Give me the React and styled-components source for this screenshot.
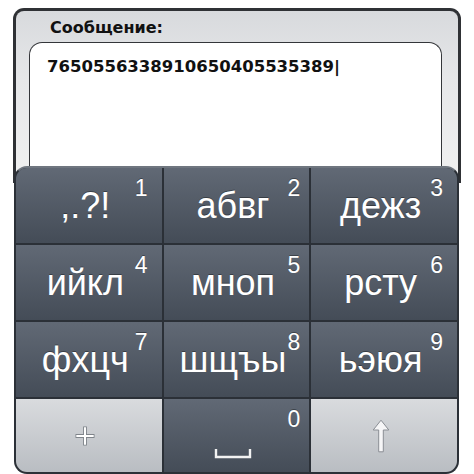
import React from 'react'
import styled, { createGlobalStyle } from 'styled-components'

const GlobalStyle = createGlobalStyle`
  html, body {
    margin: 0;
    padding: 0;
    background: #fff;
    overflow: hidden;
  }
`

const Page = styled.div`
  width: 474px;
  height: 474px;
  padding: 8px 13px 0 13px;
  box-sizing: border-box;
  overflow: hidden;
`

const Frame = styled.div`
  height: 175px;
  box-sizing: border-box;
  border: 3px solid #2f3135;
  border-bottom: none;
  border-radius: 11px 11px 0 0;
  background: linear-gradient(#d8dadd 0%, #e6e7e9 40%, #f1f1f1 100%);
  display: flex;
  flex-direction: column;
`

const Label = styled.div`
  font-family: 'DejaVu Sans', 'Open Sans', sans-serif;
  font-weight: 700;
  font-size: 16px;
  line-height: 22px;
  color: #111;
  padding: 6px 0 0 34px;
  height: 31px;
  box-sizing: border-box;
`

const MessageBox = styled.div`
  flex: 1;
  margin: 0 16px 0 13px;
  background: #fff;
  border: 1.5px solid #34363a;
  border-bottom: none;
  border-radius: 13px 13px 0 0;
  padding: 13px 0 0 17px;
  font-family: 'DejaVu Sans', 'Open Sans', sans-serif;
  font-weight: 700;
  font-size: 16.5px;
  line-height: 22px;
  color: #111;
`

const Keypad = styled.div`
  position: relative;
  z-index: 1;
  margin: -17px 2px 0 1px;
  display: grid;
  grid-template-columns: repeat(3, 1fr);
  grid-template-rows: 75px 75px 75px 73px;
  gap: 2px;
  background: #2b3037;
  border: 2px solid #2b3037;
  border-top-color: #6f767f;
  border-radius: 13px;
  overflow: hidden;
`

const Key = styled.div`
  position: relative;
  display: flex;
  align-items: ${p => (p.$bottom ? 'flex-end' : 'center')};
  justify-content: center;
  padding: 0 7px ${p => (p.$bottom ? '13px' : '0')} 0;
  background: ${p => p.$light
    ? 'linear-gradient(#d9dbde, #b9bdc2)'
    : 'linear-gradient(#616975, #444c57)'};
  font-family: 'Liberation Sans', Arial, sans-serif;
  color: #fff;
`

const Letters = styled.span`
  font-size: 36px;
  line-height: 1;
  text-shadow: 0 -1px 0 rgba(0, 0, 0, 0.35);
`

const Digit = styled.span`
  position: absolute;
  top: 9px;
  right: ${p => p.$right}px;
  font-size: 23px;
  line-height: 1;
  text-shadow: 0 -1px 0 rgba(0, 0, 0, 0.35);
`

const PlusIcon = () => (
  <svg width="22" height="22" viewBox="0 0 22 22">
    <path d="M11 1.5v19M1.5 11h19" stroke="#7f848a" strokeWidth="3.8" fill="none" />
    <path d="M11 2.3v17.4M2.3 11h17.4" stroke="#ffffff" strokeWidth="2" fill="none" />
  </svg>
)

const SpaceIcon = () => (
  <svg width="38" height="11" viewBox="0 0 38 11">
    <path d="M2 1v8h34V1" stroke="#f2f2f2" strokeWidth="2.4" fill="none" />
  </svg>
)

const ArrowIcon = () => (
  <svg width="18" height="34" viewBox="0 0 18 34">
    <path
      d="M9 1.2L16.8 11H11.3V32.8H6.7V11H1.2Z"
      fill="#f6f6f7"
      stroke="#8a8e94"
      strokeWidth="1"
      strokeLinejoin="round"
    />
  </svg>
)

const keys = [
  { letters: ',.?!', digit: '1' },
  { letters: 'абвг', digit: '2' },
  { letters: 'дежз', digit: '3' },
  { letters: 'ийкл', digit: '4' },
  { letters: 'мноп', digit: '5' },
  { letters: 'рсту', digit: '6' },
  { letters: 'фхцч', digit: '7' },
  { letters: 'шщъы', digit: '8' },
  { letters: 'ьэюя', digit: '9' }
]

const digitRight = [14, 9, 14]

export default function App () {
  return (
    <>
      <GlobalStyle />
      <Page>
        <Frame>
          <Label>Сообщение:</Label>
          <MessageBox>7650556338910650405535389|</MessageBox>
        </Frame>
        <Keypad>
          {keys.map((k, i) => (
            <Key key={k.digit}>
              <Letters>{k.letters}</Letters>
              <Digit $right={digitRight[i % 3]}>{k.digit}</Digit>
            </Key>
          ))}
          <Key $light>
            <PlusIcon />
          </Key>
          <Key $bottom>
            <SpaceIcon />
            <Digit $right={9}>0</Digit>
          </Key>
          <Key $light>
            <ArrowIcon />
          </Key>
        </Keypad>
      </Page>
    </>
  )
}
